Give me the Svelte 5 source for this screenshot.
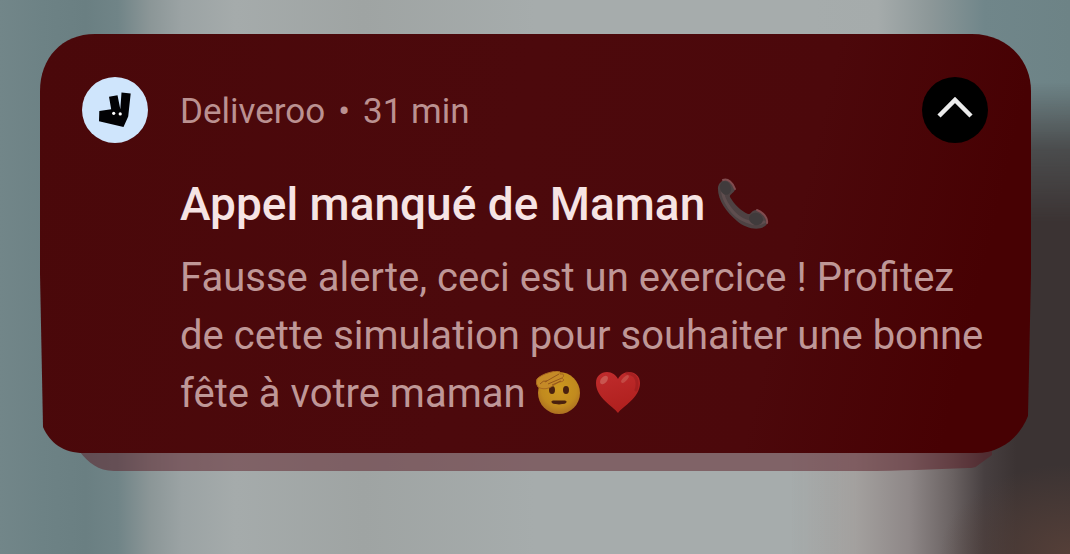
<script>
  let expanded = $state(true);
</script>

<main>
  <div class="stack">
    <svg class="under" viewBox="0 0 910 36" preserveAspectRatio="none" aria-hidden="true">
      <path d="M0 0H910V20L895 31Q893 33 886 33C850 34 820 36 780 36H34C18 36 8 27 0 17Z" />
    </svg>
    <article>
      <svg class="surface" viewBox="0 0 991 419" preserveAspectRatio="none" aria-hidden="true">
        <defs>
          <linearGradient id="wine" x1="0" y1="0" x2="1" y2="0.100">
            <stop offset="0" stop-color="#4a080a" />
            <stop offset="0.5" stop-color="#4c090c" />
            <stop offset="0.8" stop-color="#4c080b" />
            <stop offset="1" stop-color="#470103" />
          </linearGradient>
        </defs>
        <path
          fill="url(#wine)"
          d="M55 0H932C966 0 991 25 991 57V240L988 382C980 403 961 419 936 419H44C23 419 10 409 3 393L0 240V57C0 24 22 0 55 0Z"
        />
      </svg>

      <svg class="logo" viewBox="0 0 66 66" role="img" aria-label="Deliveroo">
        <circle cx="33" cy="33" r="33" fill="#cfe5fc" />
        <path
          d="M27 19.7L35.5 18.3L38.3 32.2L39.5 15.5L48.7 16.4L46.2 39.5L41.5 50L17 44.3L17.3 34L29.2 32.2Z"
          fill="#020204"
        />
        <circle cx="31.7" cy="36.3" r="1.6" fill="#fff" />
        <circle cx="38.2" cy="36.9" r="1.6" fill="#fff" />
      </svg>

      <div class="content">
        <header>
          <p class="meta"><span>Deliveroo</span><span>•</span><span>31 min</span></p>
          <button
            type="button"
            aria-label="Réduire la notification"
            aria-expanded={expanded}
            onclick={() => (expanded = !expanded)}
          >
            <svg viewBox="0 0 66 66" class:flipped={!expanded} aria-hidden="true">
              <path d="M17 39L33 23L49 39" fill="none" stroke="#ececec" stroke-width="4.5" />
            </svg>
          </button>
        </header>

        <h1>
          Appel manqué de Maman
          <svg class="phone" viewBox="0 0 52 52" role="img" aria-label="téléphone">
            <path
              d="M5 3C10 -1 17 5 18 11C18 15 12 16 13 19C17 26 24 33 31 36C34 37 35 31 40 32C47 34 53 42 50 46C44 54 29 51 20 43C9 34 0 21 1 9Q2 5 5 3Z"
              fill="#4e4243"
            />
            <path
              d="M5 9C5 23 17 39 29 43C36 46 43 46 47 44"
              fill="none"
              stroke="#6a5758"
              stroke-width="3"
              stroke-linecap="round"
              opacity=".6"
            />
            <ellipse cx="8.500" cy="10" rx="5.500" ry="7" transform="rotate(-20 8.500 10)" fill="#403b3c" />
            <ellipse cx="39" cy="41" rx="7" ry="6" transform="rotate(20 39 41)" fill="#403b3c" />
            <path
              d="M6 2C11 0 16 5 18 11M40 32C46 34 51 40 50 45"
              fill="none"
              stroke="#814c4f"
              stroke-width="2"
              stroke-linecap="round"
            />
          </svg>
        </h1>

        {#if expanded}
          <p class="body">
            Fausse alerte, ceci est un exercice&nbsp;! Profitez de cette simulation pour souhaiter une
            bonne fête à votre maman
            <span class="emojis">
              <svg viewBox="0 0 46 44" role="img" aria-label="salut">
                <defs>
                  <radialGradient id="face" cx=".5" cy=".4" r=".6">
                    <stop offset="0" stop-color="#cd981f" />
                    <stop offset=".7" stop-color="#c18a1e" />
                    <stop offset="1" stop-color="#ad7021" />
                  </radialGradient>
                </defs>
                <circle cx="23" cy="22" r="21" fill="url(#face)" />
                <ellipse cx="16" cy="19" rx="3" ry="4" fill="#49200e" />
                <ellipse cx="30" cy="19" rx="3" ry="4" fill="#49200e" />
                <path d="M17 30H29Q31 30 29.500 32Q23 34 16.500 32Q15 30 17 30Z" fill="#49200e" stroke="#49200e" />
                <path
                  d="M1 8C6 3 14 1 21 0Q25 0 24 3L27 3Q29 5 26 7L28 9Q27 11 23 11L18 14C13 18 7 19 2 16Q-1 12 1 8Z"
                  fill="#c58a27"
                  stroke="#a8681f"
                  stroke-width="1"
                />
                <path
                  d="M9 11L23 3M12 13L26 7M16 14L25 10M4 13Q7 9 11 10"
                  fill="none"
                  stroke="#96571b"
                  stroke-width="1"
                />
              </svg>
              <svg viewBox="0 0 46 44" role="img" aria-label="cœur rouge">
                <defs>
                  <linearGradient id="heart" x1="0" y1="0" x2="0.300" y2="1">
                    <stop offset="0" stop-color="#c02c2d" />
                    <stop offset="1" stop-color="#b0201e" />
                  </linearGradient>
                </defs>
                <path
                  d="M23 42C18 35 1 27 1 12C1 5 6 1 12 1C17 1 21 4 23 8C25 4 29 1 34 1C40 1 45 5 45 12C45 27 28 35 23 42Z"
                  fill="url(#heart)"
                />
                <path
                  d="M32 2C41 3 44 10 41 19"
                  fill="none"
                  stroke="#8f191b"
                  stroke-width="3"
                  stroke-linecap="round"
                  opacity=".45"
                />
                <ellipse cx="9" cy="9" rx="3" ry="5" transform="rotate(40 9 9)" fill="#cc6059" opacity=".8" />
                <ellipse cx="30" cy="8" rx="2" ry="5" transform="rotate(45 30 8)" fill="#cc6059" opacity=".6" />
              </svg>
            </span>
          </p>
        {/if}
      </div>
    </article>
  </div>
</main>

<style>
  :global(body) {
    margin: 0;
  }

  main {
    position: relative;
    isolation: isolate;
    box-sizing: border-box;
    min-height: 100vh;
    padding: 34px 39px 84px 40px;
    font-family: Roboto, sans-serif;
    background: linear-gradient(to right, #728689 0%, #6d8285 4%, #6a7f82 8%, #708487 11%, #8b9697 14%, #9ba3a4 17%, #a5abab 22%, #9fa4a3 34%, #a6acac 50%, #a6acac 76%, #a5abab 82%, #8c9798 87%, #70868a 92%, #6d8386 100%);
  }

  main::before {
    content: '';
    position: absolute;
    inset: 0;
    z-index: -1;
    background:
      radial-gradient(ellipse 130px 90px at 100% 100%, #553f38 0%, transparent 100%),
      linear-gradient(to right, transparent 74%, #a3a09e 80%, #8e8787 85%, #6a6262 89%, #473f40 92%, #3b3333 95%, #3b3333 100%);
    mask-image: linear-gradient(to bottom, transparent 15%, #000000b0 27%, #000 40%);
  }

  .stack {
    position: relative;
  }

  .under {
    position: absolute;
    left: 40px;
    bottom: -18px;
    width: calc(100% - 79px);
    height: 36px;
    fill: #5c1c25;
    opacity: 0.5;
  }

  article {
    position: relative;
    display: flex;
    align-items: flex-start;
    gap: 32px;
    padding: 43px 43px 30px 42px;
    isolation: isolate;
  }

  .surface {
    position: absolute;
    inset: 0;
    z-index: -1;
    width: 100%;
    height: 100%;
  }

  .logo {
    flex: none;
    width: 66px;
    height: 66px;
  }

  .content {
    flex: 1;
    min-width: 0;
  }

  header {
    display: flex;
    align-items: center;
    justify-content: space-between;
    gap: 16px;
  }

  p,
  h1 {
    margin: 0;
  }

  .meta {
    display: flex;
    gap: 13px;
    padding-top: 4px;
    font-size: 35px;
    line-height: 40px;
    color: #bb9191;
  }

  button {
    flex: none;
    width: 66px;
    height: 66px;
    padding: 0;
    border: 0;
    border-radius: 50%;
    background: #000;
    cursor: pointer;
  }

  button svg {
    display: block;
    width: 100%;
    height: 100%;
  }

  .flipped {
    transform: rotate(180deg);
  }

  h1 {
    margin-top: 32px;
    font-size: 46px;
    font-weight: 500;
    line-height: 58px;
    color: #f6e4e4;
  }

  .phone {
    width: 52px;
    height: 52px;
    vertical-align: -10px;
  }

  .body {
    margin-top: 16px;
    font-size: 40px;
    line-height: 58px;
    color: #bf9797;
  }

  .emojis {
    display: inline-flex;
    gap: 13px;
    vertical-align: -8px;
  }

  .emojis svg {
    width: 46px;
    height: 44px;
  }
</style>
